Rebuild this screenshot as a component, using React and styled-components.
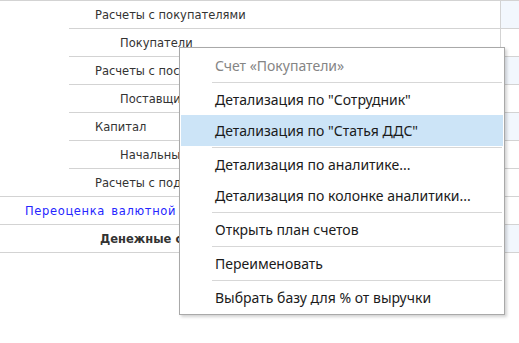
import React from "react";
import styled, { createGlobalStyle } from "styled-components";

const Global = createGlobalStyle`
  html, body { margin: 0; padding: 0; background: #ffffff; }
  body { width: 519px; height: 343px; overflow: hidden; }
`;

const Page = styled.div`
  position: relative;
  width: 519px;
  height: 343px;
  background: #fff;
`;

const Table = styled.div`
  display: flex;
  flex-direction: column;
  border-top: 1px solid #d3d3d3;
  font-family: "DejaVu Sans", sans-serif;
  font-size: 11.5px;
  color: #333;
`;

const Row = styled.div`
  display: flex;
  height: 28px;
`;

const MainCell = styled.div`
  width: 500px;
  border-right: 1px solid #d3d3d3;
  display: flex;
`;

const Line = styled.div`
  flex: 1;
  margin-left: ${(p) => p.$indent}px;
  border-bottom: 1px solid #d3d3d3;
  display: flex;
  align-items: center;
  padding-left: ${(p) => p.$textX - p.$indent}px;
  color: ${(p) => (p.$link ? "#2626ff" : "#333")};
  font-weight: ${(p) => (p.$bold ? 700 : 400)};
  letter-spacing: ${(p) => (p.$link ? "0.65px" : "0")};
  word-spacing: ${(p) => (p.$link ? "2px" : "0")};
  white-space: nowrap;
  overflow: hidden;
`;

const SideCell = styled.div`
  flex: 1;
  border-bottom: 1px solid #d3d3d3;
  background: ${(p) => (p.$shaded ? "#f2f7fd" : "#fff")};
`;

const Menu = styled.div`
  position: absolute;
  left: 179px;
  top: 47px;
  width: 322px;
  padding: 1px;
  background: #fff;
  border: 1px solid #a9a9a9;
  box-shadow: 2px 2px 3px rgba(0, 0, 0, 0.18);
  font-family: "Noto Sans", sans-serif;
  font-size: 14px;
  color: #1b1b1b;
  display: flex;
  flex-direction: column;
`;

const Item = styled.div`
  height: ${(p) => (p.$header ? 32 : 31)}px;
  display: flex;
  align-items: center;
  padding-left: 34px;
  white-space: nowrap;
  background: ${(p) => (p.$active ? "#cce4f7" : "transparent")};
  color: ${(p) => (p.$header ? "#858585" : "#1b1b1b")};
`;

const Separator = styled.div`
  height: 1px;
  margin: 1px 1px 1px 31px;
  background: #d7d7d7;
`;

const rows = [
  { text: "Расчеты с покупателями", x: 95, indent: 69, shaded: true },
  { text: "Покупатели", x: 120, indent: 69 },
  { text: "Расчеты с поставщиками", x: 95, indent: 69, shaded: true },
  { text: "Поставщики", x: 120, indent: 69 },
  { text: "Капитал", x: 95, indent: 69, shaded: true },
  { text: "Начальные остатки", x: 120, indent: 69 },
  { text: "Расчеты с подотчетными лицами", x: 95, indent: 0 },
  { text: "Переоценка валютной выручки", x: 25, indent: 0, link: true },
  { text: "Денежные средства", x: 100, indent: 0, bold: true, shaded: true },
];

export default function App() {
  return (
    <Page>
      <Global />
      <Table>
        {rows.map((r, i) => (
          <Row key={i}>
            <MainCell>
              <Line $indent={r.indent} $textX={r.x} $link={r.link} $bold={r.bold}>
                {r.text}
              </Line>
            </MainCell>
            <SideCell $shaded={r.shaded} />
          </Row>
        ))}
      </Table>
      <Menu>
        <Item $header>Счет «Покупатели»</Item>
        <Separator />
        <Item>Детализация по "Сотрудник"</Item>
        <Item $active>Детализация по "Статья ДДС"</Item>
        <Separator />
        <Item>Детализация по аналитике...</Item>
        <Item>Детализация по колонке аналитики...</Item>
        <Separator />
        <Item>Открыть план счетов</Item>
        <Separator />
        <Item>Переименовать</Item>
        <Separator />
        <Item>Выбрать базу для % от выручки</Item>
      </Menu>
    </Page>
  );
}
